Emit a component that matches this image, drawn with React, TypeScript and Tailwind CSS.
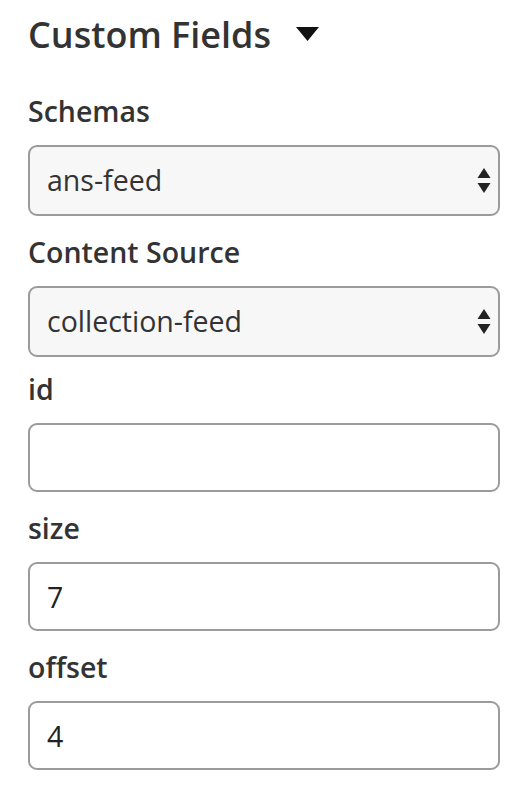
import React from "react";

const Arrows = () => (
  <svg
    width="14"
    height="26"
    viewBox="0 0 14 26"
    className="pointer-events-none absolute right-[9px] top-1/2 -translate-y-1/2"
  >
    <path d="M7 0 L13.5 10 L0.5 10 Z" fill="#222" />
    <path d="M0.5 15 L13.5 15 L7 25 Z" fill="#222" />
  </svg>
);

const Label = ({ children, tight }: { children: React.ReactNode; tight?: boolean }) => (
  <label
    className={`${tight ? "mt-[15px]" : "mt-[19px]"} mb-[17px] block text-[28.5px] font-semibold leading-[34px] text-[#333]`}
  >
    {children}
  </label>
);

const SelectField = ({ label, value }: { label: string; value: string }) => (
  <div className="flex flex-col">
    <Label>{label}</Label>
    <div className="relative w-[472px]">
      <select
        defaultValue={value}
        className="h-[71px] w-full appearance-none rounded-[9px] border-2 border-[#9b9b9b] bg-[#f7f7f7] pl-[17px] pr-10 text-[28.5px] text-[#333] outline-none"
      >
        <option value={value}>{value}</option>
      </select>
      <Arrows />
    </div>
  </div>
);

const TextField = ({ label, value, tight }: { label: string; value: string; tight?: boolean }) => (
  <div className="flex flex-col">
    <Label tight={tight}>{label}</Label>
    <input
      type="text"
      defaultValue={value}
      className="h-[69px] w-[472px] rounded-[9px] border-2 border-[#9b9b9b] bg-white pl-[17px] text-[28.5px] text-[#222] outline-none"
    />
  </div>
);

const App = () => {
  return (
    <div className="min-h-screen bg-white pl-[28px] pt-[13px] font-['Open_Sans',sans-serif]">
      <div className="mb-[18px] flex items-center gap-[25px]">
        <h1 className="text-[36px] font-semibold leading-[44px] text-[#333]">Custom Fields</h1>
        <svg width="23" height="14" viewBox="0 0 23 14" className="mt-[-2px]">
          <path d="M0 0 H23 L11.5 14 Z" fill="#111" />
        </svg>
      </div>
      <SelectField label="Schemas" value="ans-feed" />
      <SelectField label="Content Source" value="collection-feed" />
      <TextField label="id" value="" tight />
      <TextField label="size" value="7" />
      <TextField label="offset" value="4" />
    </div>
  );
};

export default App;
